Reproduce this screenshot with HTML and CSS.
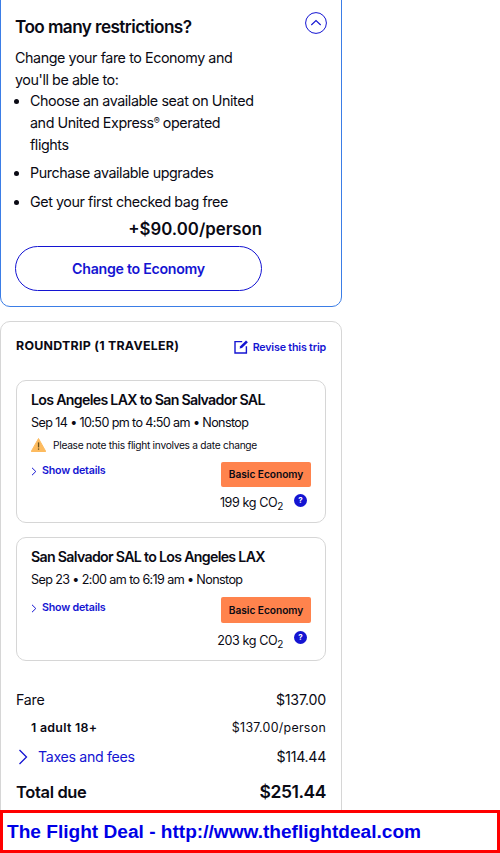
FILE: index.html
```html
<!DOCTYPE html>
<html lang="en">
<head>
<meta charset="utf-8">
<title>The Flight Deal</title>
<link rel="stylesheet" href="styles.css">
</head>
<body>
<main class="column">
  <section class="upsell">
    <div class="upsell-head">
      <h2 class="upsell-title">Too many restrictions?</h2>
      <svg class="collapse" viewBox="0 0 22 22" width="22" height="22"><circle cx="11" cy="11" r="10.4" fill="none" stroke="#1414d2" stroke-width="1"/><path d="M6.3 13 L11 8.6 L15.7 13" fill="none" stroke="#1414d2" stroke-width="1.1"/></svg>
    </div>
    <p class="upsell-intro">Change your fare to Economy and you'll be able to:</p>
    <ul class="benefits">
      <li class="benefit-long">Choose an available seat on United and United Express<sup class="reg">®</sup> operated flights</li>
      <li>Purchase available upgrades</li>
      <li>Get your first checked bag free</li>
    </ul>
    <div class="upsell-price">+$90.00/person</div>
    <button class="change-btn">Change to Economy</button>
  </section>

  <section class="summary">
    <div class="summary-head">
      <h3 class="summary-title">ROUNDTRIP (1 TRAVELER)</h3>
      <a class="revise">
        <svg viewBox="0 0 15 15" width="15" height="15"><path d="M8.2 2.6 H1 V14 H12.4 V7.2" fill="none" stroke="#1414d2" stroke-width="1.4"/><path d="M5.6 9.6 L6.2 7.3 L12 1.4 L13.9 3.2 L8 9 Z" fill="#1414d2"/></svg>
        <span>Revise this trip</span>
      </a>
    </div>

    <article class="flight flight-one">
      <h4 class="route">Los Angeles LAX to San Salvador SAL</h4>
      <p class="times">Sep 14 • 10:50 pm to 4:50 am • Nonstop</p>
      <p class="notice">
        <svg viewBox="0 0 15 14" width="15" height="14"><path d="M7.5 0.5 L14.8 13.5 H0.2 Z" fill="#fdbb5f" stroke="#fdbb5f" stroke-linejoin="round"/><rect x="6.9" y="4.4" width="1.3" height="5" fill="#6b5320"/><rect x="6.9" y="10.4" width="1.3" height="1.4" fill="#6b5320"/></svg>
        <span>Please note this flight involves a date change</span>
      </p>
      <div class="flight-foot">
        <a class="details">
          <svg viewBox="0 0 6 9" width="6" height="9"><path d="M1 0.8 L4.8 4.5 L1 8.2" fill="none" stroke="#1414d2" stroke-width="1"/></svg>
          <span>Show details</span>
        </a>
        <div class="fare-side">
          <div class="fare-badge">Basic Economy</div>
          <div class="co2">
            <span class="co2-text">199 kg CO<sub>2</sub></span>
            <span class="help">?</span>
          </div>
        </div>
      </div>
    </article>

    <article class="flight flight-two">
      <h4 class="route">San Salvador SAL to Los Angeles LAX</h4>
      <p class="times">Sep 23 • 2:00 am to 6:19 am • Nonstop</p>
      <div class="flight-foot">
        <a class="details">
          <svg viewBox="0 0 6 9" width="6" height="9"><path d="M1 0.8 L4.8 4.5 L1 8.2" fill="none" stroke="#1414d2" stroke-width="1"/></svg>
          <span>Show details</span>
        </a>
        <div class="fare-side">
          <div class="fare-badge tall">Basic Economy</div>
          <div class="co2">
            <span class="co2-text">203 kg CO<sub>2</sub></span>
            <span class="help">?</span>
          </div>
        </div>
      </div>
    </article>

    <div class="price-row fare-row"><span>Fare</span><span>$137.00</span></div>
    <div class="price-row adult-row"><span class="adult">1 adult 18+</span><span>$137.00/person</span></div>
    <div class="price-row taxes-row">
      <a class="taxes">
        <svg viewBox="0 0 10 16" width="10" height="16"><path d="M1.5 1 L8.5 8 L1.5 15" fill="none" stroke="#1414d2" stroke-width="1.3"/></svg>
        <span>Taxes and fees</span>
      </a>
      <span>$114.44</span>
    </div>
    <div class="price-row total-row"><span>Total due</span><span class="total-amount">$251.44</span></div>
  </section>
</main>
<footer class="deal-banner">The Flight Deal - http://www.theflightdeal.com</footer>
</body>
</html>
```
FILE: styles.css
```css
* { box-sizing: border-box; }
html, body { margin: 0; padding: 0; }
body {
  width: 500px;
  height: 853px;
  overflow: hidden;
  position: relative;
  background: #fff;
  color: #0a0a14;
  font-family: Inter, "Noto Sans", sans-serif;
}
h2, h3, h4, p, ul { margin: 0; padding: 0; }
.column { width: 342px; margin-top: -12px; }

.upsell {
  height: 319px;
  border: 1px solid #3b7de6;
  border-radius: 10px;
  padding: 24px 14px 0;
  margin-bottom: 14px;
}
.upsell-head { display: flex; justify-content: space-between; align-items: flex-start; height: 28px; }
.upsell-title { font-size: 17.2px; font-weight: 600; letter-spacing: -0.58px; line-height: 26px; margin-top: 1px; }
.collapse { margin-top: -1px; }
.upsell-intro { width: 240px; font-size: 14.3px; line-height: 21.6px; letter-spacing: -0.42px; margin-top: 6px; }
.benefits { width: 247px; list-style: disc; padding-left: 15px; font-size: 14.3px; line-height: 21.7px; letter-spacing: -0.42px; }
.benefits li { margin-bottom: 7.1px; }
.reg { font-size: 9px; line-height: 0; vertical-align: 4px; }
.upsell-price { width: 247px; text-align: right; font-size: 16.8px; font-weight: 600; line-height: 24px; margin-top: -3px; letter-spacing: 0; }
.change-btn {
  display: block;
  width: 247px;
  height: 45px;
  margin-top: 5px;
  border: 1px solid #1414d2;
  border-radius: 23px;
  background: #fff;
  color: #1414d2;
  font-family: inherit;
  font-size: 14.2px;
  font-weight: 600;
  letter-spacing: -0.28px;
}

.summary {
  height: 520px;
  border: 1px solid #d6d6d6;
  border-radius: 10px;
  padding: 0 15px;
}
.summary-head { display: flex; justify-content: space-between; height: 58px; padding-top: 15px; }
.summary-title { font-size: 12.4px; font-weight: 700; line-height: 18px; letter-spacing: 0.26px; }
.revise { display: flex; align-items: flex-start; gap: 4px; color: #1414d2; font-size: 10.7px; font-weight: 600; line-height: 16px; letter-spacing: -0.18px; padding-top: 2px; }
.revise span { margin-top: 1px; }

.flight {
  border: 1px solid #d6d6d6;
  border-radius: 10px;
  padding: 9px 14px 0;
  margin-bottom: 14px;
}
.flight-one { height: 143px; }
.flight-two { height: 124px; padding-top: 9px; margin-bottom: 29px; }
.route { font-size: 14.2px; font-weight: 600; line-height: 20px; letter-spacing: -0.7px; }
.times { font-size: 12.6px; line-height: 18px; letter-spacing: -0.62px; margin-top: 4px; }
.notice { display: flex; align-items: center; gap: 7px; font-size: 10.2px; line-height: 14px; letter-spacing: -0.28px; margin-top: 5px; height: 16px; }
.flight-foot { display: flex; justify-content: space-between; align-items: flex-start; margin-top: 9px; }
.flight-two .flight-foot { margin-top: 8px; }
.details { display: flex; align-items: center; gap: 5px; color: #1414d2; font-size: 10.7px; font-weight: 600; line-height: 16px; letter-spacing: -0.2px; margin-top: 1px; }
.flight-two .details { margin-top: 3px; }
.fare-side { display: flex; flex-direction: column; align-items: flex-end; width: 100px; }
.fare-badge {
  width: 90px;
  height: 25px;
  background: #ff834d;
  border-radius: 2px;
  color: #0a0a14;
  font-size: 10.2px;
  font-weight: 600;
  line-height: 25px;
  text-align: center;
  letter-spacing: -0.05px;
}
.fare-badge.tall { height: 26px; line-height: 26px; }
.co2 { display: flex; justify-content: flex-end; align-items: flex-start; gap: 11px; width: 110px; margin-top: 6px; margin-right: 4px; }
.flight-two .co2 { margin-top: 8px; }
.co2-text { font-size: 12.6px; line-height: 18px; letter-spacing: -0.4px; white-space: nowrap; margin-top: 1px; }
.co2-text sub { font-size: 10px; line-height: 0; vertical-align: -3px; }
.help {
  width: 13px;
  height: 13px;
  margin-top: 1px;
  border-radius: 50%;
  background: #1414d2;
  color: #fff;
  font-size: 8px;
  font-weight: 700;
  line-height: 13px;
  text-align: center;
}
.flight-two .help { margin-top: 0; }

.price-row { display: flex; justify-content: space-between; align-items: center; }
.fare-row { font-size: 14.2px; line-height: 20px; letter-spacing: -0.2px; }
.adult-row { font-size: 12.4px; line-height: 18px; margin-top: 9px; letter-spacing: 0.28px; }
.adult { font-weight: 600; padding-left: 15px; }
.taxes-row { font-size: 14.2px; line-height: 20px; margin-top: 10px; letter-spacing: -0.32px; }
.taxes { display: flex; align-items: center; gap: 10px; color: #1414d2; padding-left: 2px; }
.total-row { font-size: 16.5px; font-weight: 600; line-height: 24px; margin-top: 13px; letter-spacing: -0.35px; }
.total-amount { font-size: 17.5px; letter-spacing: -0.45px; }

.deal-banner {
  position: absolute;
  left: 0;
  right: 0;
  bottom: 0;
  height: 43px;
  border: 3px solid #f00;
  background: #fff;
  color: #0000e6;
  font-family: "Liberation Sans", Arial, sans-serif;
  font-size: 19.1px;
  font-weight: 700;
  line-height: 37px;
  padding-left: 4px;
}
```
